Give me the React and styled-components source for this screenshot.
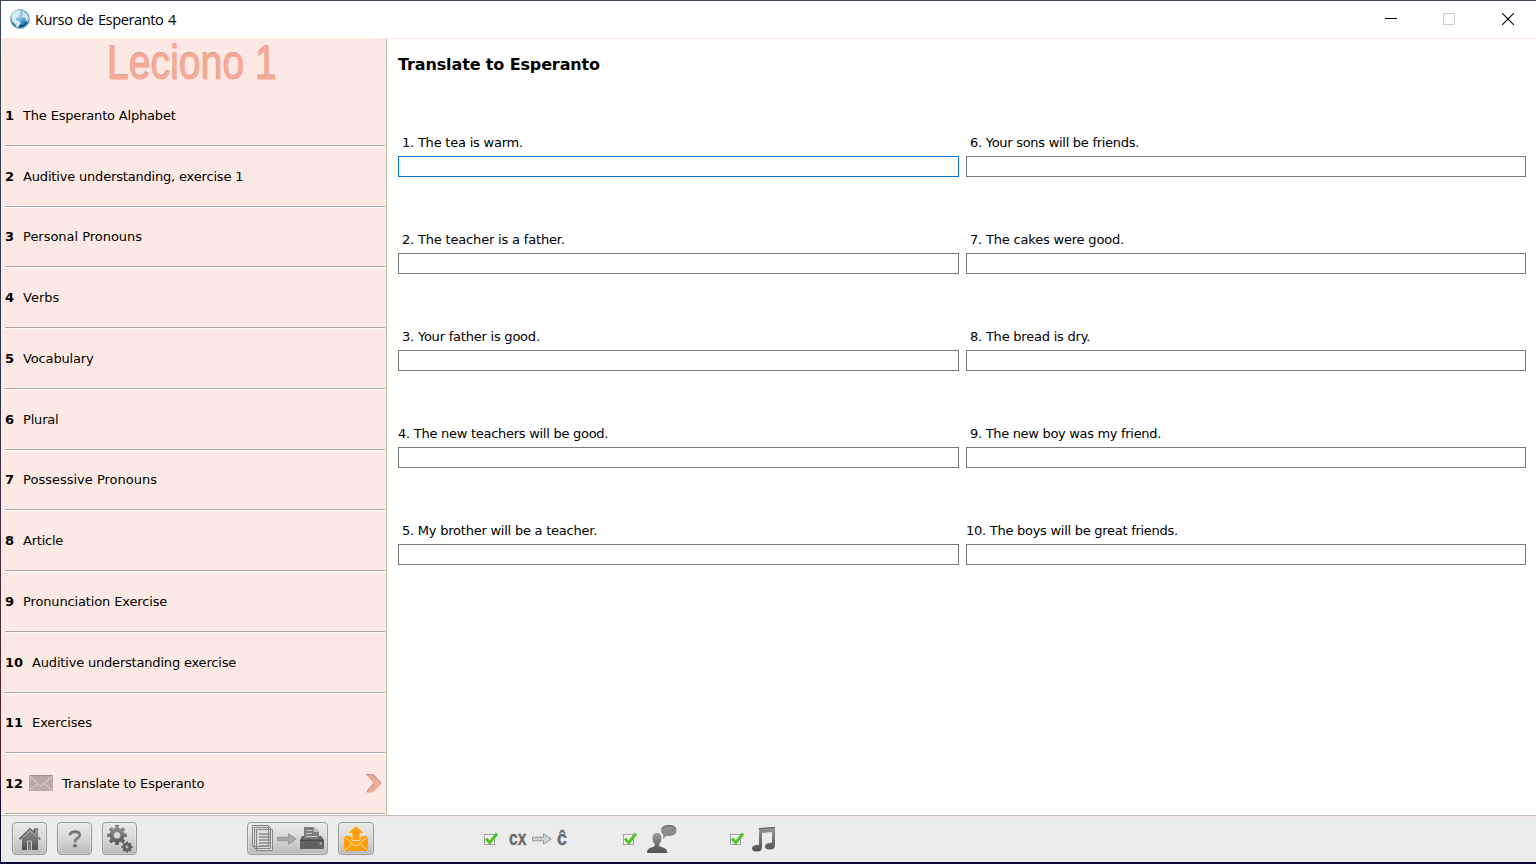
import React from "react";
import styled, { createGlobalStyle } from "styled-components";

const GlobalStyle = createGlobalStyle`
  * { box-sizing: border-box; }
  body { margin: 0; overflow: hidden; background: #0b0b3c; color: #000;
    font-family: "DejaVu Sans", sans-serif; font-size: 13px; }
  svg { display: block; flex: none; }
`;

const Desktop = styled.div`
  width: 1536px;
  height: 864px;
  padding: 1px 0 2px 1px;
  background: linear-gradient(#3f4859, #2a3550 40%, #5a1f22 88%, #0b0b3c 94%);
  overflow: hidden;
`;
const Window = styled.div`
  display: flex;
  flex-direction: column;
  height: 861px;
  background: #fff;
`;
const TitleBar = styled.header`
  display: flex;
  align-items: center;
  flex: none;
  height: 38px;
  padding: 0 0 1px 9px;
  border-bottom: 1px solid #fde9e4;
`;
const Title = styled.span`
  flex: 1;
  margin-left: 5px;
  font-family: "Open Sans", "Noto Sans", sans-serif;
  font-size: 14.6px;
  letter-spacing: -0.42px;
  word-spacing: 1.2px;
  white-space: nowrap;
`;
const WindowButton = styled.span`
  display: flex;
  justify-content: center;
  width: 58.5px;
  position: relative;
  left: 1px;
`;
const Main = styled.div`
  display: flex;
  flex: none;
  height: 776px;
`;
const Sidebar = styled.nav`
  width: 386px;
  flex: none;
  background: #fde9e3;
  border-right: 1px solid #bab8a9;
`;
const Lesson = styled.h1`
  display: flex;
  justify-content: center;
  height: 47px;
  margin: 0;
  padding-right: 3px;
  color: #f7a997;
  font: 400 48px/47px "Liberation Sans", sans-serif;
  -webkit-text-stroke: 0.9px #f7a997;
  text-shadow: -0.5px -1px 0 #b99f9a;
  white-space: nowrap;
  span { transform: scaleX(0.815); }
`;
const Item = styled.div`
  display: flex;
  align-items: center;
  height: ${(p) => p.$height}px;
  margin: 0 1px 0 4px;
  padding-bottom: ${(p) => (p.$height === 60 ? 3 : 1)}px;
  border-bottom: 1px solid #fff;
  box-shadow: inset 0 -1px 0 #aaa8a4;
  white-space: nowrap;
  b { margin-right: 9px; }
`;
const ItemName = styled.span`
  letter-spacing: ${(p) => p.$tracking}px;
`;
const MailSlot = styled.span`
  margin: 0 9px 1px -3px;
`;
const ArrowSlot = styled.span`
  margin: 0 3px 1px auto;
`;
const Content = styled.main`
  flex: 1;
  padding: 15px 10px 0 11px;
`;
const Heading = styled.h2`
  margin: 0;
  font-size: 16px;
  line-height: 22px;
  letter-spacing: -0.13px;
`;
const Exercises = styled.div`
  display: grid;
  grid-template-columns: 561px 560px;
  grid-template-rows: repeat(5, 97px);
  grid-auto-flow: column;
  column-gap: 7px;
  padding-top: 58px;
`;
const Exercise = styled.label`
  display: block;
`;
const Question = styled.span`
  display: block;
  height: 22px;
  line-height: 18px;
  padding-left: ${(p) => (p.$flush ? 0 : 4)}px;
  letter-spacing: ${(p) => p.$tracking}px;
  white-space: nowrap;
`;
const Answer = styled.input`
  display: block;
  width: 100%;
  height: 21px;
  border: 1px solid ${(p) => (p.$active ? "#0078d7" : "#7a7a7a")};
  background: #fff;
  outline: none;
`;
const Toolbar = styled.footer`
  display: flex;
  align-items: center;
  flex: none;
  height: 47px;
  padding: 0 0 1px 11px;
  background: #ececec;
  border-top: 1px solid #c5beb8;
  box-shadow: inset 0 1px 0 #f5e5e0;
`;
const ToolButton = styled.button`
  display: flex;
  align-items: center;
  justify-content: center;
  width: ${(p) => p.$width || 35}px;
  height: 33px;
  margin: 0 10px 0 0;
  padding: 0;
  border: 1px solid #999;
  border-radius: 4px;
  background: linear-gradient(#eaeaea, #d8d8d8 50%, #b9b9b9);
  box-shadow: inset 0 0 0 1px #ffffff44;
`;
const Spacer = styled.span`
  width: ${(p) => p.$width}px;
  flex: none;
`;
const Option = styled.label`
  display: flex;
  align-items: center;
  width: ${(p) => p.$width}px;
  flex: none;
  padding-top: 1px;
`;
const Shift = styled.span`
  margin-left: ${(p) => p.$gap}px;
`;
const OptionText = styled.b`
  font: 700 20px/22px "Liberation Sans", sans-serif;
  color: #6a6a6a;
  -webkit-text-stroke: 0.3px #6a6a6a;
  transform: scaleX(${(p) => p.$scale});
  transform-origin: left;
  width: ${(p) => p.$width}px;
  margin: 0 0 2px ${(p) => p.$gap}px;
`;

const Metal = ({ id }) => (
  <defs>
    <linearGradient id={id} x1="0" y1="0" x2="0" y2="1">
      <stop offset="0" stopColor="#9a9a9a" />
      <stop offset="1" stopColor="#505050" />
    </linearGradient>
  </defs>
);
const Globe = () => (
  <svg width="20" height="20" viewBox="0 0 20 20">
    <defs>
      <radialGradient id="globe" cx=".38" cy=".28" r=".78">
        <stop offset="0" stopColor="#c9e4f2" />
        <stop offset=".45" stopColor="#64aed5" />
        <stop offset=".82" stopColor="#15659d" />
        <stop offset="1" stopColor="#65cbed" />
      </radialGradient>
    </defs>
    <circle cx="10" cy="10" r="9.5" fill="url(#globe)" stroke="#6ea4c2" strokeWidth=".7" />
    <path d="M1.5 7 4 3l4-2 3 1-1 2-2 1 1 2-3 2 0 2 3 1 2 2-2 3-2 2-2-4-3-3zM13 2l4 3 2 4-1 4-2-1-1-3-3-1 1-3-1-2z" fill="#e3eff4" opacity=".88" />
    <path d="M9 16q5 1 8-3-2 5-7 5z" fill="#073f71" opacity=".7" />
  </svg>
);
const Envelope = () => (
  <svg width="24" height="16" viewBox="0 0 24 16">
    <rect width="24" height="16" rx="1" fill="#b9aaa3" />
    <path d="M1 .5h22" stroke="#9c8d87" />
    <path d="M1 1.5 10.5 10q1.5 1 3 0L23 1.5M1 15l8-6.5M23 15l-8-6.5" fill="none" stroke="#e3d5ce" strokeWidth="1" />
  </svg>
);
const Chevron = () => (
  <svg width="16" height="19" viewBox="0 0 16 19">
    <path d="M0 .5h7l8.5 9-8.5 9H0l8-9z" fill="#f6a796" />
    <path d="M0 .7h7l8 8.5M8 9.5l-7 8" fill="none" stroke="#b39993" strokeWidth="1.2" />
  </svg>
);
const Home = () => (
  <svg width="24" height="24" viewBox="0 0 24 24">
    <Metal id="home" />
    <path d="M1 12 12 1l4 4V2h4v7l3 3-1 1-2-1v11H4V12l-2 1z" fill="url(#home)" />
    <path d="M1.5 11.5 12 1.5l4.2 4V2h4" fill="none" stroke="#464646" strokeWidth="1" />
    <path d="m3.5 11.5 8.5-8 8.5 8" fill="none" stroke="#b9b9b9" strokeWidth=".7" />
    <path d="M9.5 23v-9h4v9" fill="#777" stroke="#c4c4c4" />
  </svg>
);
const Help = () => (
  <svg width="14" height="18" viewBox="0 0 14 18">
    <path d="M2 5.3Q2.3 2 7 2t4.7 3Q11.7 7.3 9 8.5 7 9.3 7 12.5" fill="none" stroke="#7b7b7b" strokeWidth="2.6" />
    <path d="M1 4.2Q2.5 .7 7 .7q4.2 0 5.5 2.5" fill="none" stroke="#555" strokeWidth=".8" />
    <ellipse cx="7" cy="15.7" rx="2.1" ry="1.6" fill="#666" />
  </svg>
);
const cog = (cx, cy, r, n, depth) => {
  const points = [];
  for (let i = 0; i < n; i++) {
    [[-0.34, r - depth], [-0.2, r], [0.2, r], [0.34, r - depth]].forEach(([o, d]) => {
      const a = ((i + o) / n) * Math.PI * 2 - Math.PI / 2;
      points.push(`${(cx + Math.cos(a) * d).toFixed(2)},${(cy + Math.sin(a) * d).toFixed(2)}`);
    });
  }
  return points.join(" ");
};
const Gears = () => (
  <svg width="26" height="28" viewBox="0 0 26 28">
    <Metal id="gears" />
    <polygon points={cog(10, 10.2, 10, 8, 2.6)} fill="url(#gears)" />
    <path d="M2.8 5.5 4 4M8 .4h4M16 4l1.5 1.5" fill="none" stroke="#555" strokeWidth=".8" />
    <circle cx="10" cy="10.2" r="3.5" fill="#dadada" stroke="#777" strokeWidth=".5" />
    <polygon points={cog(20, 22, 5.6, 8, 1.3)} fill="#606060" />
    <circle cx="20" cy="22" r="1.5" fill="#b4b4b4" />
  </svg>
);
const ArrowShape = ({ light }) => (
  <svg width="20" height="12" viewBox="0 0 20 12">
    <path d="M.5 4.2h11V.8L19.3 6l-7.8 5.2V7.8H.5z" fill={light ? "#d2d2d2" : "#aaa"} stroke="#929292" strokeWidth=".9" />
  </svg>
);
const Pages = () => (
  <svg width="22" height="27" viewBox="0 0 22 27">
    <g fill="#dcdcdc" stroke="#858585">
      <path d="M.5 .5h16v21H.5zM2.5 2.5h16v21h-16zM4.5 4.5h16v21h-16z" />
    </g>
    <path d="M7 9h11M7 12h11M7 15h11M7 18h11M7 21h11" stroke="#8c8c8c" strokeWidth="1.3" />
  </svg>
);
const Printer = () => (
  <svg width="24" height="23" viewBox="0 0 24 23">
    <path d="M4 0h10l5 4v8H4z" fill="#7d7d7d" />
    <path d="M6 3.5h6M6 6.5h6M6 9.5h11" stroke="#c8c8c8" />
    <path d="M14 0v4.5h5z" fill="#b5b5b5" stroke="#d3d3d3" strokeWidth=".7" />
    <path d="M2 9h2v3h15V9h2l3 4v8q0 1-1 1H1q-1 0-1-1v-8z" fill="#606060" />
    <path d="M0 13.5h24" stroke="#494949" />
    <circle cx="20.5" cy="16.5" r="1" fill="#cfcfcf" />
  </svg>
);
const SendMail = () => (
  <svg width="28" height="28" viewBox="0 0 28 28">
    <path d="M2 11h5l7 4 7-4h5v15H2z" fill="#ff9d0a" />
    <path d="M2 11.5 12 20q2 1.5 4 0l10-8.5M2 25.5l8.5-7M26 25.5l-8.500-7" fill="none" stroke="#fff0cf" strokeWidth=".8" />
    <path d="m14 .8 8.5 7.7H18v7h-8v-7H5.5z" fill="#ff9c08" stroke="#f7e4bd" strokeWidth="1" />
  </svg>
);
const Check = () => (
  <svg width="15" height="14" viewBox="0 0 15 14">
    <rect x=".5" y="2.5" width="10" height="10" fill="#f4f4f4" stroke="#a1a1a1" />
    <path d="m2 6.5 3.7 4.3L13 1.5" fill="none" stroke="#56c32c" strokeWidth="3.1" strokeLinejoin="round" />
  </svg>
);
const Speaker = () => (
  <svg width="30" height="29" viewBox="0 0 30 29">
    <Metal id="speaker" />
    <path d="M10 8q4.5 0 4.5 5 0 4-2.2 6v2l6 2.5q2 1 2 4.500H0q0-3.500 2-4.500l5.700-2.500v-2q-2.200-2-2.200-6 0-5 4.500-5z" fill="url(#speaker)" />
    <path d="M22 0q7 0 7.500 5.500Q29 11 21 11q-1 0-2-.3L16 14l.3-4.5Q14 8 14 5.5 15 0 22 0z" fill="#8b8b8b" />
    <path d="M14.5 4Q16 .5 22 .5t7 4" fill="none" stroke="#606060" strokeWidth=".8" />
  </svg>
);
const Music = () => (
  <svg width="24" height="25" viewBox="0 0 24 25">
    <Metal id="music" />
    <path d="M7 1.5 23 0v18q0 4.5-5 4.5-5 0-5-3.300 0-3.700 7-3.500V5L10 6v14q0 4.500-5 4.500-5 0-5-3.200 0-3.500 7-3.500z" fill="url(#music)" />
    <path d="M7 1.5 23 .5" stroke="#555" />
  </svg>
);

const sections = [
  ["The Esperanto Alphabet", 61, -0.18],
  ["Auditive understanding, exercise 1", 61, -0.18],
  ["Personal Pronouns", 60, -0.03],
  ["Verbs", 61, 0],
  ["Vocabulary", 61, -0.15],
  ["Plural", 61, -0.2],
  ["Possessive Pronouns", 60, 0],
  ["Article", 61, -0.25],
  ["Pronunciation Exercise", 61, -0.14],
  ["Auditive understanding exercise", 61, -0.19],
  ["Exercises", 60, -0.12],
  ["Translate to Esperanto", 61, -0.18],
];
const questions = [
  ["The tea is warm.", -0.22],
  ["The teacher is a father.", -0.18],
  ["Your father is good.", -0.22],
  ["The new teachers will be good.", -0.27],
  ["My brother will be a teacher.", -0.23],
  ["Your sons will be friends.", -0.28],
  ["The cakes were good.", -0.19],
  ["The bread is dry.", -0.22],
  ["The new boy was my friend.", -0.31],
  ["The boys will be great friends.", -0.27],
];

export default function App() {
  return (
    <Desktop>
      <GlobalStyle />
      <Window>
        <TitleBar>
          <Globe />
          <Title>Kurso de Esperanto 4</Title>
          <WindowButton><svg width="12" height="12"><path d="M0 5.5h12" stroke="#000" /></svg></WindowButton>
          <WindowButton><svg width="12" height="12"><rect x=".5" y=".5" width="11" height="11" fill="none" stroke="#ccc" /></svg></WindowButton>
          <WindowButton><svg width="12" height="12"><path d="m0 0 12 12M12 0 0 12" stroke="#000" strokeWidth="1.1" /></svg></WindowButton>
        </TitleBar>
        <Main>
          <Sidebar>
            <Lesson><span>Leciono 1</span></Lesson>
            {sections.map(([name, height, tracking], i) => (
              <Item key={name} $height={height}>
                <b>{i + 1}</b>
                {i === 11 && <MailSlot><Envelope /></MailSlot>}
                <ItemName $tracking={tracking}>{name}</ItemName>
                {i === 11 && <ArrowSlot><Chevron /></ArrowSlot>}
              </Item>
            ))}
          </Sidebar>
          <Content>
            <Heading>Translate to Esperanto</Heading>
            <Exercises>
              {questions.map(([text, tracking], i) => (
                <Exercise key={text}>
                  <Question $flush={i === 3 || i === 9} $tracking={tracking}>{i + 1}. {text}</Question>
                  <Answer $active={i === 0} />
                </Exercise>
              ))}
            </Exercises>
          </Content>
        </Main>
        <Toolbar>
          <ToolButton aria-label="Home"><Home /></ToolButton>
          <ToolButton aria-label="Help"><Help /></ToolButton>
          <ToolButton aria-label="Settings"><Gears /></ToolButton>
          <Spacer $width={100} />
          <ToolButton $width={81} aria-label="Print"><Pages /><Shift $gap={3}><ArrowShape /></Shift><Shift $gap={3}><Printer /></Shift></ToolButton>
          <ToolButton $width={36} aria-label="Send"><SendMail /></ToolButton>
          <Spacer $width={100} />
          <Option $width={139}>
            <Check />
            <OptionText $gap={10} $scale={0.78} $width={23}>cx</OptionText>
            <ArrowShape light />
            <OptionText $gap={5} $scale={0.9} $width={12}>ĉ</OptionText>
          </Option>
          <Option $width={107}><Check /><Shift $gap={9}><Speaker /></Shift></Option>
          <Option $width={60}><Check /><Shift $gap={7}><Music /></Shift></Option>
        </Toolbar>
      </Window>
    </Desktop>
  );
}
